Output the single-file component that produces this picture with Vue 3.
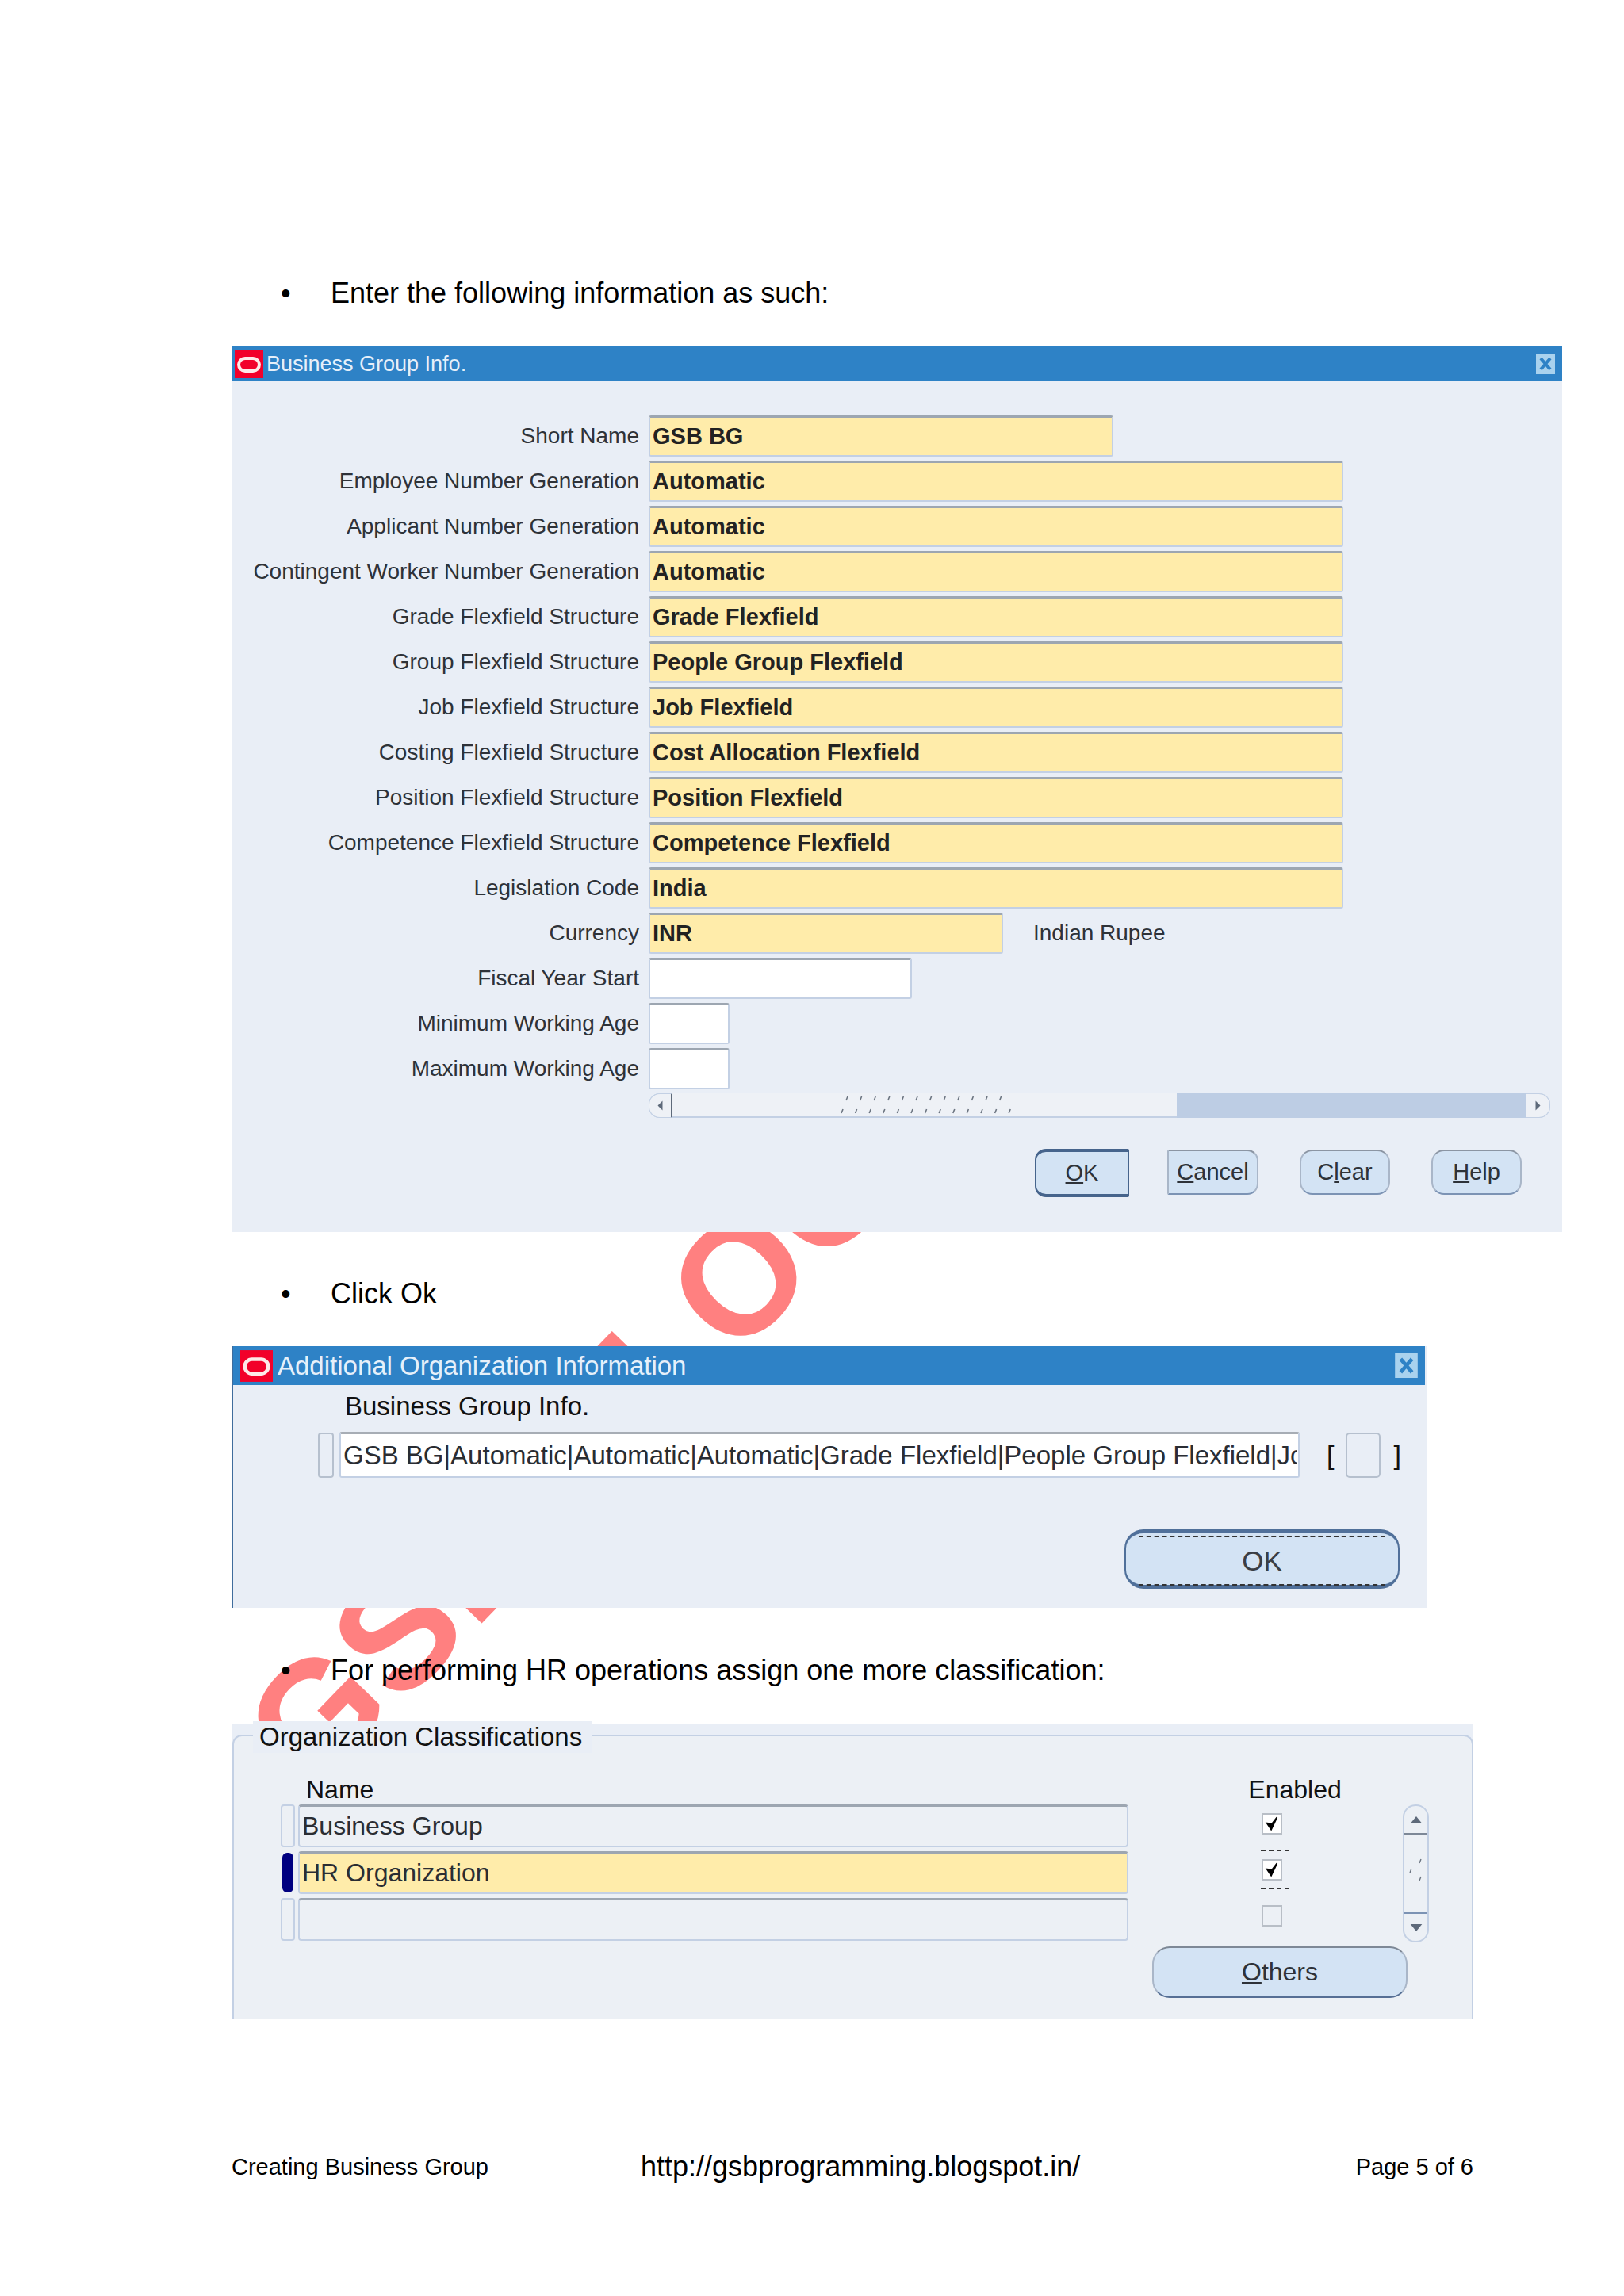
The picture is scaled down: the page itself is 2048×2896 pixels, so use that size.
<script setup>
const rows = [
  { label: 'Short Name', value: 'GSB BG', size: 'w-name', tone: 'req' },
  { label: 'Employee Number Generation', value: 'Automatic', size: 'w-long', tone: 'req' },
  { label: 'Applicant Number Generation', value: 'Automatic', size: 'w-long', tone: 'req' },
  { label: 'Contingent Worker Number Generation', value: 'Automatic', size: 'w-long', tone: 'req' },
  { label: 'Grade Flexfield Structure', value: 'Grade Flexfield', size: 'w-long', tone: 'req' },
  { label: 'Group Flexfield Structure', value: 'People Group Flexfield', size: 'w-long', tone: 'req' },
  { label: 'Job Flexfield Structure', value: 'Job Flexfield', size: 'w-long', tone: 'req' },
  { label: 'Costing Flexfield Structure', value: 'Cost Allocation Flexfield', size: 'w-long', tone: 'req' },
  { label: 'Position Flexfield Structure', value: 'Position Flexfield', size: 'w-long', tone: 'req' },
  { label: 'Competence Flexfield Structure', value: 'Competence Flexfield', size: 'w-long', tone: 'req' },
  { label: 'Legislation Code', value: 'India', size: 'w-long', tone: 'req' },
  { label: 'Currency', value: 'INR', size: 'w-cur', tone: 'req', extra: 'Indian Rupee' },
  { label: 'Fiscal Year Start', value: '', size: 'w-fiscal', tone: 'open' },
  { label: 'Minimum Working Age', value: '', size: 'w-age', tone: 'open' },
  { label: 'Maximum Working Age', value: '', size: 'w-age', tone: 'open' }
]
const buttons = [
  { first: 'O', rest: 'K', cls: 'btn-default' },
  { first: 'C', rest: 'ancel', cls: 'btn-cancel' },
  { first: '', mid: 'C', under: 'l', rest: 'ear', cls: 'btn-std' },
  { first: 'H', rest: 'elp', cls: 'btn-std' }
]
const classRows = [
  { name: 'Business Group', tone: 'ro', on: true },
  { name: 'HR Organization', tone: 'cur', on: true, focus: true },
  { name: '', tone: 'ro', on: false }
]
const gripTop = Array.from({ length: 12 }, (_, i) => 7 + i * 17.6)
const gripBottom = Array.from({ length: 13 }, (_, i) => 1 + i * 17.6)
</script>

<template>
  <div class="page">
    <div class="watermark">GSB BLOG</div>

    <div class="bullet first"><span class="dot">•</span><span>Enter the following information as such:</span></div>

    <section class="win win-one">
      <header class="bar">
        <svg class="logo" viewBox="0 0 36 35"><rect width="36" height="35" fill="#f2002a" /><rect x="5" y="10" width="26" height="16" rx="8" fill="none" stroke="#fde9e9" stroke-width="4" /></svg>
        <span class="bar-title">Business Group Info.</span>
        <svg class="close" viewBox="0 0 24 26"><rect width="24" height="26" fill="#a9d2ee" /><path d="M6 6l12 14M18 6L6 20" stroke="#2e82c6" stroke-width="4" /></svg>
      </header>
      <div class="form">
        <div v-for="r in rows" :key="r.label" class="row">
          <label class="lab">{{ r.label }}</label>
          <div class="field" :class="[r.size, r.tone]">{{ r.value }}</div>
          <span v-if="r.extra" class="extra">{{ r.extra }}</span>
        </div>
        <div class="hscroll">
          <div class="hbtn left"><svg viewBox="0 0 12 20" class="harrow"><path d="M10 2v16L2 10z" fill="#5e6a7a" /></svg></div>
          <div class="hthumb">
            <svg class="grip" viewBox="0 0 230 30">
              <g stroke="#6b7480" stroke-width="1.6">
                <path v-for="x in gripTop" :key="'t' + x" :d="`M${x + 4} 4l-2 5`" />
                <path v-for="x in gripBottom" :key="'b' + x" :d="`M${x + 4} 20l-2 5`" />
              </g>
            </svg>
          </div>
          <div class="htrack"></div>
          <div class="hbtn right"><svg viewBox="0 0 12 20" class="harrow"><path d="M2 2v16l8-8z" fill="#5e6a7a" /></svg></div>
        </div>
        <div class="actions">
          <button v-for="b in buttons" :key="b.cls + b.rest" class="btn" :class="b.cls">
            <template v-if="b.mid">{{ b.mid }}<u>{{ b.under }}</u>{{ b.rest }}</template>
            <template v-else><u>{{ b.first }}</u>{{ b.rest }}</template>
          </button>
        </div>
      </div>
    </section>

    <div class="bullet second"><span class="dot">•</span><span>Click Ok</span></div>

    <section class="win win-two">
      <header class="bar bar-two">
        <svg class="logo logo-two" viewBox="0 0 36 35"><rect width="36" height="35" fill="#f2002a" /><rect x="5" y="10" width="26" height="16" rx="8" fill="none" stroke="#fde9e9" stroke-width="4" /></svg>
        <span class="bar-title title-two">Additional Organization Information</span>
        <svg class="close close-two" viewBox="0 0 24 26"><rect width="24" height="26" fill="#a9d2ee" /><path d="M6 6l12 14M18 6L6 20" stroke="#2e82c6" stroke-width="4" /></svg>
      </header>
      <div class="two-body">
        <div class="two-label">Business Group Info.</div>
        <div class="two-row">
          <div class="marker"></div>
          <div class="field white two-field"><span class="clip">GSB BG|Automatic|Automatic|Automatic|Grade Flexfield|People Group Flexfield|Job Flexfield</span></div>
          <span class="brk">[</span>
          <div class="ctx"></div>
          <span class="brk">]</span>
        </div>
        <div class="two-action">
          <button class="btn btn-wide"><span class="dots">OK</span></button>
        </div>
      </div>
    </section>

    <div class="bullet third"><span class="dot">•</span><span>For performing HR operations assign one more classification:</span></div>

    <section class="panel">
      <div class="group">
        <span class="legend">Organization Classifications</span>
        <div class="cols">
          <div class="col-name">
            <div class="head">Name</div>
            <div v-for="(c, i) in classRows" :key="i" class="crow">
              <div class="rmark" :class="{ on: c.focus }"></div>
              <div class="field cfield" :class="c.tone">{{ c.name }}</div>
            </div>
          </div>
          <div class="col-en">
            <div class="head en">Enabled</div>
            <div v-for="(c, i) in classRows" :key="i" class="cbwrap" :class="{ focus: c.focus }">
              <div class="cb" :class="{ off: !c.on }">
                <svg v-if="c.on" viewBox="0 0 22 22" class="tick"><path d="M4 10l6 9L18 2l-7 9z" fill="#000" stroke="#000" stroke-width="2" /></svg>
              </div>
            </div>
          </div>
          <div class="vscroll">
            <div class="vbtn top"><svg viewBox="0 0 18 12" class="varrow"><path d="M9 1l8 10H1z" fill="#5e6a7a" /></svg></div>
            <div class="vmid">
              <svg viewBox="0 0 20 40" class="vgrip"><g stroke="#6b7480" stroke-width="1.4"><path d="M16 2l-2 5M4 14l-2 5M16 24l-2 5" /></g></svg>
            </div>
            <div class="vbtn bot"><svg viewBox="0 0 18 12" class="varrow"><path d="M1 1h16L9 11z" fill="#5e6a7a" /></svg></div>
          </div>
        </div>
        <div class="others-row">
          <button class="btn btn-others"><u>O</u>thers</button>
        </div>
      </div>
    </section>

    <footer class="foot">
      <span class="foot-left">Creating Business Group</span>
      <span class="foot-url">http://gsbprogramming.blogspot.in/</span>
      <span class="foot-right">Page 5 of 6</span>
    </footer>
  </div>
</template>

<style scoped>
.page { position: relative; width: 2048px; height: 2896px; box-sizing: border-box; padding: 350px 0 0 292px; background: #fff; overflow: hidden; font-family: "Liberation Sans", Arial, sans-serif; color: #111; }
.watermark { position: absolute; left: 345px; top: 2120px; font-size: 200px; font-weight: 700; line-height: 200px; color: #ff8080; white-space: nowrap; letter-spacing: 2px; transform: rotate(-46deg); transform-origin: 0 50%; z-index: 0; }
.bullet { position: relative; z-index: 1; display: flex; align-items: center; height: 40px; font-size: 36px; color: #000; }
.dot { width: 125px; flex: none; padding-left: 62px; box-sizing: border-box; font-size: 36px; }
.bullet.second { margin-top: 58px; }
.bullet.third { margin-top: 59px; }
.win { position: relative; z-index: 1; background: #e9eef6; }
.win-one { margin-top: 47px; width: 1678px; height: 1117px; }
.win-two { margin-top: 46px; width: 1508px; height: 330px; box-sizing: border-box; border-left: 2px solid #3f6c9c; }
.bar { display: flex; align-items: center; height: 44px; background: #2e82c6; box-sizing: border-box; padding: 0 9px 0 4px; }
.bar-two { height: 49px; width: 1503px; padding: 0 8px 0 9px; }
.logo { width: 36px; height: 35px; flex: none; }
.logo-two { width: 41px; height: 40px; }
.bar-title { margin-left: 4px; font-size: 27px; color: #e6f0fa; flex: 1; }
.title-two { margin-left: 6px; font-size: 33px; }
.close { width: 24px; height: 26px; flex: none; }
.close-two { width: 31px; height: 31px; }
.form { padding-top: 43px; }
.row { display: flex; align-items: center; height: 52px; margin-bottom: 5px; }
.lab { width: 514px; margin-right: 12px; flex: none; text-align: right; font-size: 28px; color: #2e3238; white-space: nowrap; }
.field { box-sizing: border-box; height: 52px; border: 2px solid #c3d0e4; border-top: 3px solid #9da6b1; border-radius: 3px; padding: 0 2px 0 3px; display: flex; align-items: center; font-size: 29px; color: #222; white-space: nowrap; overflow: hidden; }
.req { background: #ffecaa; font-weight: 700; }
.open { background: #fff; }
.w-name { width: 586px; }
.w-long { width: 876px; }
.w-cur { width: 447px; }
.w-fiscal { width: 332px; }
.w-age { width: 102px; }
.extra { margin-left: 38px; font-size: 28px; color: #2e3238; }
.hscroll { display: flex; align-items: stretch; width: 1137px; height: 31px; margin-left: 526px; margin-top: 3px; background: #bdcde4; border-radius: 14px; }
.hbtn { width: 30px; display: flex; align-items: center; justify-content: center; background: #eef1f6; border: 1px solid #c3d0e4; flex: none; box-sizing: border-box; }
.hbtn.left { border-radius: 14px 0 0 14px; border-right: 2px solid #5e6a7a; }
.hbtn.right { border-radius: 0 14px 14px 0; width: 31px; }
.harrow { width: 9px; height: 15px; }
.hthumb { width: 636px; background: #eef1f6; border-bottom: 2px solid #c3d0e4; box-sizing: border-box; display: flex; align-items: center; padding-left: 210px; }
.htrack { flex: 1; }
.grip { width: 230px; height: 30px; }
.actions { display: flex; margin-left: 1013px; margin-top: 39px; align-items: flex-start; }
.btn { font-family: "Liberation Sans", Arial, sans-serif; background: #d3e3f4; color: #2e3238; box-sizing: border-box; font-size: 29px; padding: 0; border: 2px solid #a9b6c8; border-top-color: #8b95a3; border-bottom-color: #7c93b4; border-radius: 16px; }
.btn-default { width: 119px; height: 61px; border-radius: 14px 2px 2px 14px; border: 2px solid #46648c; border-top-width: 4px; border-bottom-width: 4px; }
.btn-cancel { width: 115px; height: 57px; margin-left: 48px; margin-top: 1px; border-radius: 2px 14px 14px 2px; }
.btn-std { width: 114px; height: 57px; margin-left: 52px; margin-top: 1px; }
.btn-std + .btn-std { margin-left: 52px; }
.two-body { padding-left: 107px; }
.two-label { height: 41px; margin-left: 34px; padding-top: 5px; box-sizing: border-box; line-height: 36px; font-size: 33px; color: #111; margin-top: 4px; margin-bottom: 0; }
.two-row { display: flex; align-items: center; margin-top: 14px; height: 58px; }
.marker { width: 20px; height: 57px; box-sizing: border-box; border: 2px solid #b6c0ce; border-radius: 4px; background: #e9eef6; }
.two-field { width: 1211px; height: 58px; margin-left: 7px; background: #fff; font-size: 33px; border-top-color: #a7adb5; font-weight: 400; }
.clip { display: block; overflow: hidden; width: 100%; color: #2a2d33; }
.brk { font-size: 34px; color: #111; }
.brk:first-of-type { margin-left: 34px; }
.two-row .brk:nth-of-type(1) { margin-left: 0; }
.ctx { width: 44px; height: 57px; margin: 0 16px 0 15px; box-sizing: border-box; border: 2px solid #b6c0ce; border-radius: 5px; background: #e9eef6; }
.two-row .field + .brk { margin-left: 34px; }
.two-action { display: flex; margin-left: 1017px; margin-top: 65px; }
.btn-wide { width: 347px; height: 75px; border: 2px solid #50709a; border-top-width: 5px; border-bottom-width: 5px; border-radius: 24px; font-size: 35px; padding: 3px 16px; }
.dots { display: flex; height: 100%; align-items: center; justify-content: center; border-top: 2px dashed #333; border-bottom: 2px dashed #333; color: #3a3e45; }
.panel { position: relative; z-index: 1; margin-top: 47px; width: 1566px; height: 372px; background: #e9eef6; padding-top: 14px; box-sizing: border-box; }
.group { position: relative; box-sizing: border-box; height: 358px; margin-left: 1px; border: 2px solid #c3d0e4; border-bottom: 0; border-radius: 12px 12px 0 0; background: #ecf0f5; }
.legend { position: absolute; left: 24px; top: -19px; background: #e9eef6; padding: 0 12px 0 8px; height: 40px; line-height: 40px; font-size: 33px; color: #111; white-space: nowrap; }
.cols { display: flex; align-items: flex-start; }
.head { height: 36px; line-height: 36px; font-size: 32px; color: #111; }
.col-name { width: 1069px; margin-left: 59px; padding-top: 49px; }
.col-name .head { margin-left: 32px; margin-bottom: 1px; }
.crow { display: flex; align-items: center; height: 54px; margin-bottom: 5px; }
.rmark { width: 18px; height: 54px; box-sizing: border-box; border: 2px solid #c3d0e4; border-radius: 4px; background: #ecf0f5; flex: none; }
.rmark.on { background: #000080; border-color: #000080; border-radius: 6px; width: 14px; margin: 0 2px; height: 50px; }
.cfield { width: 1048px; height: 54px; margin-left: 4px; font-size: 32px; border-radius: 4px; color: #2a2d33; }
.ro { background: #ecf0f5; }
.cur { background: #ffecaa; }
.col-en { width: 215px; margin-left: 131px; padding-top: 49px; text-align: center; box-sizing: border-box; }
.col-en .head { margin-left: 9px; width: 140px; margin-bottom: 0; }
.cbwrap { box-sizing: border-box; width: 36px; height: 50px; margin-left: 36px; margin-bottom: 8px; display: flex; align-items: center; padding-left: 1px; }
.cbwrap.focus { border-top: 2px dashed #333; border-bottom: 2px dashed #333; }
.cb { box-sizing: border-box; width: 26px; height: 27px; border: 2px solid #b8bec6; background: #fff; display: flex; align-items: center; justify-content: center; }
.cb.off { background: #ecf0f5; }
.tick { width: 20px; height: 21px; }
.vscroll { margin-top: 86px; margin-left: 0; width: 33px; height: 174px; box-sizing: border-box; border: 2px solid #c3d0e4; border-radius: 16px; display: flex; flex-direction: column; background: #ecf0f5; flex: none; }
.vbtn { height: 34px; display: flex; align-items: center; justify-content: center; flex: none; }
.vbtn.top { border-bottom: 2px solid #7d8897; }
.vbtn.bot { border-top: 2px solid #7c93b4; }
.varrow { width: 18px; height: 11px; }
.vmid { flex: 1; display: flex; align-items: center; justify-content: center; }
.vgrip { width: 20px; height: 40px; }
.others-row { position: absolute; right: 81px; bottom: 26px; }
.btn-others { width: 322px; height: 65px; border-radius: 22px; font-size: 32px; border: 2px solid #a9b6c8; border-top-color: #7e8896; border-bottom-color: #566f95; }
.foot { position: relative; z-index: 1; display: flex; align-items: center; height: 40px; margin-top: 167px; width: 1566px; color: #000; }
.foot-left { width: 516px; font-size: 29px; flex: none; }
.foot-url { font-size: 36px; flex: 1; }
.foot-right { font-size: 29px; }
</style>
